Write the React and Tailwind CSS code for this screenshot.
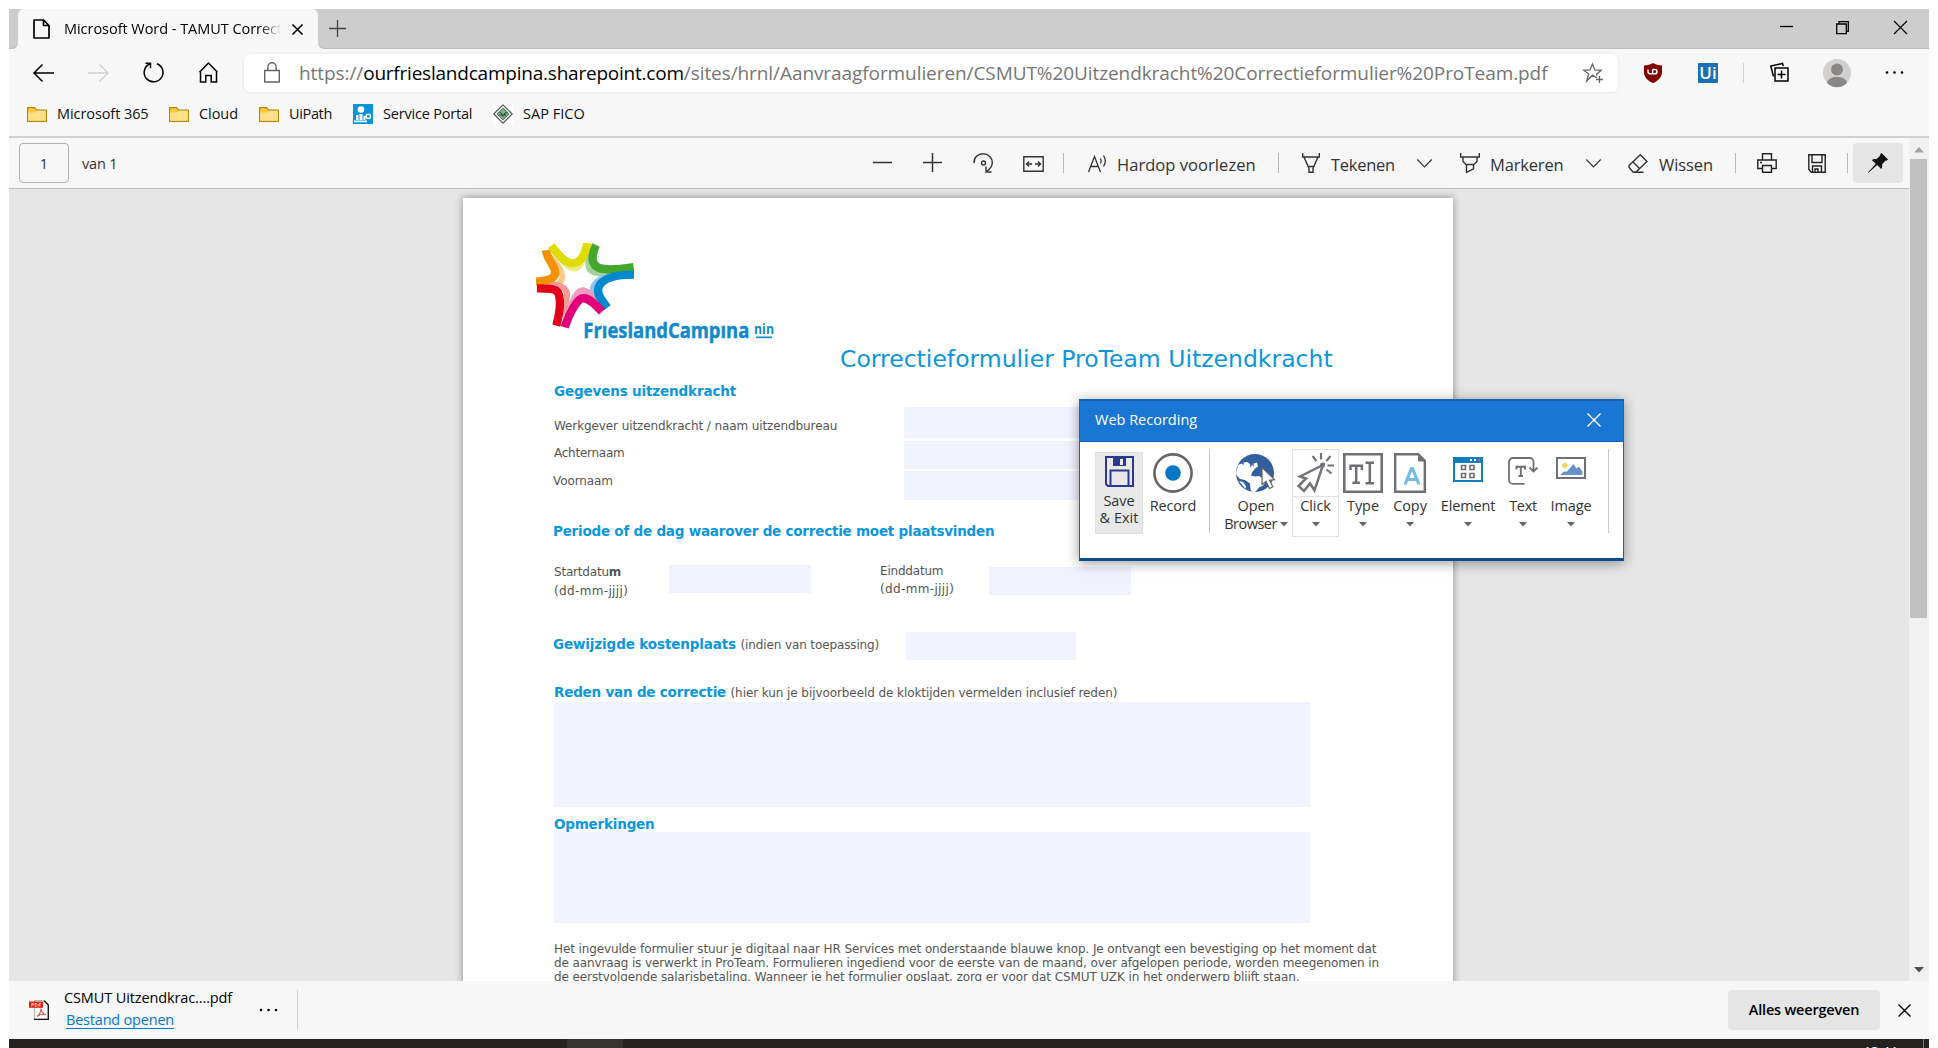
import React from 'react';

function Icon({ w, h, className = '', sw = 1.4, children }) {
  return (
    <svg
      width={w}
      height={h}
      viewBox={`0 0 ${w} ${h}`}
      fill="none"
      stroke="currentColor"
      strokeWidth={sw}
      className={`shrink-0 overflow-visible ${className}`}
    >
      {children}
    </svg>
  );
}

const Sep = ({ className = '' }) => <div className={`w-px shrink-0 bg-[#b8b8b8] ${className}`} />;

const Folder = ({ className = '' }) => (
  <Icon w={20} h={16} sw={1.2} className={className}>
    <path d="M.6 1.6h7l2 2.6h9.8v11.2H.6z" fill="#ffc83d" stroke="#b9860b" strokeLinejoin="round" />
    <path d="M1.2 6.6h6.6l2-1.8h9v10H1.2z" fill="#ffe08a" stroke="none" />
  </Icon>
);

function TabStrip() {
  return (
    <div className="flex h-10 bg-[linear-gradient(#cdcdcd_50%,#f7f7f7_50%)]">
      <div className="w-[9px] rounded-br-md border-b border-[#bdbdbd] bg-[#cdcdcd]" />
      <div className="flex w-[300px] items-center rounded-t-md bg-[#f7f7f7]">
        <Icon w={17} h={20} sw={1.7} className="ml-[15px] text-black">
          <path d="M1 1h9.5L16 6.500V19H1zM10.500 1v5.500H16" strokeLinejoin="round" />
        </Icon>
        <div className="ml-[14px] w-[217px] overflow-hidden whitespace-nowrap bg-linear-to-r from-black from-88% to-[#f7f7f7] bg-clip-text text-[14.5px] leading-5 tracking-[-0.04px] text-transparent">
          Microsoft Word - TAMUT Correctieformulier
        </div>
        <Icon w={11} h={11} sw={1.6} className="ml-[11px] text-black">
          <path d="M.5.5l10 10M10.500.5l-10 10" />
        </Icon>
      </div>
      <div className="flex flex-1 items-center rounded-bl-md border-b border-[#bdbdbd] bg-[#cdcdcd]">
        <Icon w={17} h={17} sw={1.3} className="ml-[11px] text-[#444]">
          <path d="M8.500 0v17M0 8.500h17" />
        </Icon>
        <Icon w={13} h={13} sw={1.3} className="ml-auto mb-1 text-black">
          <path d="M0 6.500h13" />
        </Icon>
        <Icon w={13} h={13} sw={1.3} className="ml-[43px] mb-[2px] text-black">
          <path d="M.7 3h9.600v9.600H.7zM3 3V.7h9.300V10.300h-2" />
        </Icon>
        <Icon w={13} h={13} sw={1.2} className="mb-[2px] ml-[45px] mr-[22px] text-black">
          <path d="M0 0l13 13M13 0L0 13" />
        </Icon>
      </div>
    </div>
  );
}

function AddressRow() {
  return (
    <div className="flex h-[47px] items-center">
      <Icon w={21} h={18} sw={1.5} className="ml-[24px] text-black">
        <path d="M1 9h20M9.500.5L1 9l8.500 8.500" />
      </Icon>
      <Icon w={21} h={18} sw={1.4} className="ml-[34px] text-[#cfcfcf]">
        <path d="M0 9h20M11.500.5L20 9l-8.500 8.500" />
      </Icon>
      <Icon w={21} h={21} sw={1.5} className="ml-[34px] text-black">
        <path d="M6.500 2A9.400 9.400 0 1 0 14 1.700M2.500 1.300h5v5" />
      </Icon>
      <Icon w={19} h={21} sw={1.5} className="ml-[35px] text-black">
        <path d="M1.500 9.500V20h5.300v-6.500h5.400V20h5.300V9.500M.5 10.300L9.500 1l9 9.300" />
      </Icon>
      <div className="ml-[26px] flex h-[38px] w-[1374px] shrink-0 items-center rounded-md bg-white shadow-[0_0_3px_rgba(0,0,0,0.1)]">
        <Icon w={16} h={21} sw={1.4} className="ml-5 text-[#666]">
          <path d="M.7 8.500h14.600V20H.7zM3.800 8.500V5a4.200 4.200 0 0 1 8.400 0v3.500" />
        </Icon>
        <div className="ml-[19px] flex w-[1260px] shrink-0 whitespace-nowrap text-[19px] leading-[26px] text-[#767676]">
          <span className="tracking-[-0.08px]">https://</span>
          <span className="tracking-[-0.22px] text-black">ourfrieslandcampina.sharepoint.com</span>
          <span className="tracking-[-0.08px]">
            /sites/hrnl/Aanvraagformulieren/CSMUT%20Uitzendkracht%20Correctieformulier%20ProTeam.pdf
          </span>
        </div>
        <Icon w={21} h={20} sw={1.3} className="ml-6 text-[#666]">
          <path d="M13.800 15L9.500 12.200 3.700 18l1.900-7L.8 7.300l6.200-.4L9.500.9l2.400 6 6.300.4-4.700 3.900.3 1.400M16.500 13v7M13 16.500h7" />
        </Icon>
      </div>
      <Icon w={18} h={20} className="ml-[26px]">
        <path d="M9 0c2.500 1.500 5.500 2.200 9 2.400v6.600c0 5.500-4 9-9 11-5-2-9-5.500-9-11V2.400C3.500 2.200 6.500 1.500 9 0z" fill="#800000" stroke="none" />
        <path d="M4 6.500v2.300a2 2 0 0 0 2 2h2.600V6.500M8.600 10.800h2.200a2.150 2.150 0 0 0 0-4.300H8.600" stroke="#fff" strokeWidth="1.500" />
      </Icon>
      <div className="ml-9 flex h-5 w-5 shrink-0 items-center justify-center rounded-[1px] bg-[#1b6fb5] text-[17px] font-semibold leading-5 text-white">
        Ui
      </div>
      <Sep className="ml-[25px] h-5 !bg-[#d0d0d0]" />
      <Icon w={19} h={19} sw={1.5} className="ml-[26px] text-black">
        <path d="M5 5h13v13H5zM11.500 7.500v8M7.500 11.500h8M3.500 13.500L.8 3l11.700-2.500L13.300 3" />
      </Icon>
      <Icon w={28} h={28} className="ml-[34px]">
        <circle cx="14" cy="14" r="14" fill="#d2d0ce" stroke="none" />
        <circle cx="14" cy="10.500" r="6" fill="#8a8886" stroke="none" />
        <path d="M4 24c1-4.500 5-6 10-6s9 1.500 10 6a14 14 0 0 1-20 0z" fill="#8a8886" stroke="none" />
      </Icon>
      <Icon w={19} h={4} className="ml-[34px] text-black">
        <g fill="currentColor" stroke="none">
          <circle cx="2" cy="1.500" r="1.300" />
          <circle cx="9.500" cy="1.500" r="1.300" />
          <circle cx="17" cy="1.500" r="1.300" />
        </g>
      </Icon>
    </div>
  );
}

function Bookmarks() {
  return (
    <div className="flex h-9 items-center whitespace-nowrap text-[14.5px] leading-5 text-[#111]">
      <Folder className="ml-[18px]" />
      <span className="ml-[10px] w-[92px] tracking-[-0.08px]">Microsoft 365</span>
      <Folder className="ml-5" />
      <span className="ml-[10px] w-10 tracking-[-0.06px]">Cloud</span>
      <Folder className="ml-5" />
      <span className="ml-[10px] w-11 tracking-[-0.35px]">UiPath</span>
      <Icon w={20} h={20} className="ml-[20px]">
        <path d="M0 0h20v20H0z" fill="#0a94da" stroke="none" />
        <g fill="#fff" stroke="none">
          <circle cx="8" cy="5.500" r="3.300" />
          <path d="M3 11h2.500v5H3zM6.500 10h3v6h-3zM10.500 12h2v4h-2zM1 16.500h13v1.700H1z" />
        </g>
        <circle cx="15.300" cy="12.300" r="2.200" stroke="#fff" />
      </Icon>
      <span className="ml-[10px] w-[90px] tracking-[-0.2px]">Service Portal</span>
      <Icon w={20} h={20} className="ml-5">
        <path d="M0 0h20v20H0z" fill="#fff" stroke="none" />
        <path d="M10 .8l9.200 9.200L10 19.200.8 10z" fill="#eef2ef" stroke="#5a5a5a" strokeWidth="1.200" />
        <path d="M10 4l6 6-6 6-6-6z" fill="#7fae8c" stroke="#555" strokeWidth=".8" />
        <path d="M7 8l3 4 3.500-4M6.500 11h7" stroke="#2f5a3d" strokeWidth="1.200" />
      </Icon>
      <span className="ml-[10px] tracking-[0.02px]">SAP FICO</span>
    </div>
  );
}

const Chevron = ({ className }) => (
  <Icon w={15} h={9} sw={1.1} className={className}>
    <path d="M.3.5l7.200 7.500L14.700.5" />
  </Icon>
);

function PdfToolbar() {
  return (
    <div className="flex h-[51px] flex-1 items-center whitespace-nowrap border-b border-[#bcbebe] bg-[#f7f7f7] text-[#333]">
      <div className="ml-[10px] flex h-10 w-[50px] items-center justify-center rounded-sm border border-[#b0b0b0] pt-px text-[14.5px]">1</div>
      <span className="ml-[13px] w-[40px] pt-px text-[14.5px] leading-5 tracking-[-0.2px]">van 1</span>
      <Icon w={19} h={20} sw={1.5} className="ml-[751px]"><path d="M0 9.500h19" /></Icon>
      <Icon w={19} h={20} sw={1.5} className="ml-[31px]"><path d="M0 9.500h19M9.500 0v19" /></Icon>
      <Icon w={21} h={20} sw={1.4} className="ml-[31px]">
        <path d="M1 10C.8 4.500 5 .8 10 .8c5.500 0 9.300 4 9.300 8.700 0 4-2.300 6.500-5.300 8.500M13 13.500V19h5.500" />
        <circle cx="10.500" cy="10" r="2" />
      </Icon>
      <Icon w={21} h={16} sw={1.4} className="mt-px ml-[29px]">
        <path d="M.8.8h19.400v14.400H.8zM3.500 8H9M12 8h5.500M6 5.500L3.500 8 6 10.500M15 5.500L17.500 8 15 10.500" />
      </Icon>
      <Sep className="ml-[19px] h-5" />
      <Icon w={20} h={19} sw={1.3} className="ml-[24px]">
        <path d="M.5 18L6.500 2.500l6 15.500M2.500 12.500h8M12.500 4.500a5 5 0 0 1 0 5M15.500 1.500a10 10 0 0 1 0 11" />
      </Icon>
      <span className="ml-[9px] w-[140px] pt-1 text-[16.5px] leading-6 tracking-[0.05px]">Hardop voorlezen</span>
      <Sep className="ml-[21px] h-5" />
      <Icon w={18} h={20} sw={1.4} className="ml-[23px]">
        <path d="M.7 0v4h16.600V0M2 4l5 11.500v3.800h4V15.500L16 4M6 13.500h6" />
      </Icon>
      <span className="ml-[11px] w-[65px] pt-1 text-[16.5px] leading-6 tracking-[-0.26px]">Tekenen</span>
      <Chevron className="ml-[21px]" />
      <Icon w={20} h={20} sw={1.4} className="ml-[28px]">
        <path d="M.7 0v4h18.600V0M3 4v4.500l3 3h8l3-3V4M6.500 11.500v7.800l7-3.500v-4.300" />
      </Icon>
      <span className="ml-[10px] w-[75px] pt-1 text-[16.5px] leading-6 tracking-[-0.17px]">Markeren</span>
      <Chevron className="ml-[21px]" />
      <Icon w={20} h={19} sw={1.4} className="ml-[27px]">
        <path d="M1 11.500L12.300.8l6.700 6.700L8 18H5L.9 13.200zM5 8l7 7M6 18.200h9.500" />
      </Icon>
      <span className="ml-[11px] w-[55px] pt-1 text-[16.5px] leading-6 tracking-[-0.09px]">Wissen</span>
      <Sep className="ml-[21px] h-5 w-[2px]" />
      <Icon w={20} h={20} sw={1.4} className="ml-[21px] text-[#222]">
        <path d="M5.500 7V.8h9V7M5 15.500H.8V7h18.400v8.500H15M5.500 12.500h9v6.700h-9z" />
        <path d="M3 9.500h2" />
      </Icon>
      <Icon w={18} h={19} sw={1.4} className="ml-[31px] text-[#222]">
        <path d="M.8.8h16.400v17.400H3.500L.8 15.500zM4 .8v7.700h10V.8M4.500 18v-6h9v6M7 18v-3h3v3" />
      </Icon>
      <Sep className="ml-[21px] h-5" />
      <div className="ml-[5px] flex h-10 w-[50px] items-center justify-center rounded-sm bg-[#e5e5e5]">
        <Icon w={20} h={20} className="text-[#111]">
          <path d="M13.500 0L20 6.500l-1.500 1.300-1-.3-3.500 4c.5 1.500.3 3-.8 4.500l-4-4L.5 19.700 0 19.300 7.800 11l-4-4c1.500-1 3-1.300 4.500-.8l4-3.600-.2-1z" fill="currentColor" stroke="none" />
        </Icon>
      </div>
    </div>
  );
}

function Logo() {
  return (
    <svg width="240" height="102" viewBox="18 24 720 306" className="ml-[73px] block">
      <g fill="none" strokeWidth="18">
        <path d="M62 66Q112 118 90 142Q80 152 50 152" stroke="#fbc98a" />
        <path d="M86 62C112 102 134 108 150 92Q164 74 168 50" stroke="#eeec8c" />
        <path d="M180 58C170 92 174 110 200 114Q220 117 260 110" stroke="#a3d19a" />
        <path d="M270 116C222 122 196 136 189 158C186 172 192 188 206 206" stroke="#8fc6ea" />
        <path d="M122 220C132 182 146 166 160 166C176 168 186 182 198 200" stroke="#f199c2" />
        <path d="M50 149C86 147 104 154 111 172C112 200 106 214 98 236" stroke="#f29a94" />
      </g>
      <g fill="none" strokeWidth="25">
        <path d="M48 46Q50 62 64 84Q84 114 68 128Q54 138 18 140" stroke="#f39200" />
        <path d="M64 32C92 72 112 85 128 85C152 84 166 56 172 24" stroke="#dedc00" />
        <path d="M198 30C182 64 184 90 208 99Q234 108 311 96" stroke="#43a82c" />
        <path d="M312 119C248 119 216 132 206 156C199 178 214 194 232 218" stroke="#0089cf" />
        <path d="M104 277C118 234 142 190 160 189C180 191 196 208 216 230" stroke="#e2007a" />
        <path d="M21 160C64 161 82 160 87 180C93 204 88 240 79 272" stroke="#e2001a" />
      </g>
      <text x="160" y="309" textLength="498" lengthAdjust="spacingAndGlyphs" fill="#118acb" stroke="#118acb" strokeWidth="1.5" className="font-['Open_Sans'] text-[66px] font-bold">
        FrıeslandCampına
      </text>
      <text x="672" y="298" textLength="60" lengthAdjust="spacingAndGlyphs" fill="#118acb" className="font-['Open_Sans'] text-[40px] font-bold">
        nin
      </text>
      <path d="M678 307h48" stroke="#118acb" strokeWidth="5" />
    </svg>
  );
}

const Field = ({ className }) => <div className={`shrink-0 bg-[#f0f2fe] ${className}`} />;
const Head = ({ className = '', children }) => (
  <span className={`text-[13.5px] font-bold leading-4 text-[#0b97dd] ${className}`}>{children}</span>
);

function PdfPage() {
  return (
    <div className="ml-[454px] mt-[9px] flex h-[860px] w-[990px] flex-col whitespace-nowrap bg-white pt-[45px] font-['DejaVu_Sans',sans-serif] text-xs leading-4 text-[#555] shadow-[0_0_8px_rgba(0,0,0,0.4)]">
      <Logo />
      <h1 className="ml-[377px] text-[23.5px] leading-7 tracking-[0.01px] text-[#0b97dd]">
        Correctieformulier ProTeam Uitzendkracht
      </h1>
      <Head className="ml-[91px] mt-[10px] tracking-[-0.14px]">Gegevens uitzendkracht</Head>
      <div className="ml-[91px] mt-2 flex h-[31px]">
        <span className="w-[350px] pt-[11px] tracking-[-0.1px]">Werkgever uitzendkracht / naam uitzendbureau</span>
        <Field className="w-[178px]" />
      </div>
      <div className="ml-[91px] mt-[3px] flex h-7">
        <span className="w-[350px] pt-1 tracking-[-0.25px]">Achternaam</span>
        <Field className="w-[178px]" />
      </div>
      <div className="ml-[90px] mt-[2px] flex h-[29px]">
        <span className="w-[351px] pt-[2px] tracking-[-0.1px]">Voornaam</span>
        <Field className="w-[178px]" />
      </div>
      <Head className="ml-[90px] mt-[23px] tracking-[-0.22px]">Periode of de dag waarover de correctie moet plaatsvinden</Head>
      <div className="ml-[91px] mt-6 flex h-[37px]">
        <div className="w-[115px] leading-[19px]">
          <div className="tracking-[-0.2px]">Startdatu<b>m</b></div>
          <div className="tracking-[0.35px]">(dd-mm-jjjj)</div>
        </div>
        <Field className="mt-[2px] h-7 w-[142px]" />
        <div className="ml-[69px] w-[109px] leading-[18px]">
          <div className="-mt-px tracking-[-0.2px]">Einddatum</div>
          <div className="tracking-[0.35px]">(dd-mm-jjjj)</div>
        </div>
        <Field className="mt-1 h-7 w-[142px]" />
      </div>
      <div className="ml-[90px] mt-8 flex h-7">
        <div className="w-[353px] pt-1">
          <Head className="tracking-[-0.12px]">Gewijzigde kostenplaats</Head>
          <span className="ml-[4.5px] tracking-[-0.12px]">(indien van toepassing)</span>
        </div>
        <Field className="w-[170px]" />
      </div>
      <div className="ml-[91px] mt-6 h-4">
        <Head className="tracking-[-0.2px]">Reden van de correctie</Head>
        <span className="ml-[4.5px] tracking-[-0.08px]">(hier kun je bijvoorbeeld de kloktijden vermelden inclusief reden)</span>
      </div>
      <Field className="ml-[91px] mt-[2px] h-[105px] w-[756px]" />
      <Head className="ml-[91px] mt-[9px] tracking-[-0.2px]">Opmerkingen</Head>
      <Field className="ml-[91px] h-[91px] w-[756px]" />
      <p className="ml-[91px] mt-[19px] leading-[14px] tracking-[-0.117px]">
        Het ingevulde formulier stuur je digitaal naar HR Services met onderstaande blauwe knop. Je ontvangt een bevestiging op het moment dat<br />
        de aanvraag is verwerkt in ProTeam. Formulieren ingediend voor de eerste van de maand, over afgelopen periode, worden meegenomen in<br />
        <span className="tracking-[-0.1px]">de eerstvolgende salarisbetaling. Wanneer je het formulier opslaat, zorg er voor dat CSMUT UZK in het onderwerp blijft staan.</span>
      </p>
    </div>
  );
}

const Down = ({ className = '' }) => (
  <Icon w={8} h={5} className={`text-[#666] ${className}`}>
    <path d="M0 0h8L4 4.600z" fill="currentColor" stroke="none" />
  </Icon>
);

function Tool({ className, label, children }) {
  return (
    <div className={`flex shrink-0 flex-col items-center ${className}`}>
      <div className="h-12">{children}</div>
      <span className="leading-[18px]">{label}</span>
      <Down className="mt-[7px]" />
    </div>
  );
}

function RecordingDialog() {
  return (
    <div className="absolute left-[1079px] top-[399px] h-[162px] w-[545px] border border-b-[3px] border-[#1565b8] border-b-[#0b4c8c] bg-white shadow-[0_2px_12px_rgba(0,0,0,0.4)]">
      <div className="flex h-[42px] items-center justify-between border-b border-t border-[#1560b4] bg-[#1976d2] pb-[2px] pl-[15px] pr-[22px] text-white">
        <span className="text-[14.5px] leading-5 tracking-[0px]">Web Recording</span>
        <Icon w={14} h={14} sw={1.4}><path d="M.5.5l13 13M13.500.5l-13 13" /></Icon>
      </div>
      <div className="flex whitespace-nowrap pl-[15px] pt-[7px] text-[14.5px] text-[#333]">
        <div className="mt-[3px] flex h-[82px] w-12 flex-col items-center border border-[#e0e0e0] bg-[#e8e8e8] pt-1 leading-[17px]">
          <Icon w={29} h={31} sw={2} className="-mt-px text-[#2b3990]">
            <path d="M1 1h27v29H3L1 28zM5.500 30V14.500h18V30" />
            <path d="M8 1v9h13V1z" fill="currentColor" stroke="none" />
            <path d="M15 3h3v6h-3z" fill="#e8e8e8" stroke="none" />
          </Icon>
          <span className="mt-[5px] tracking-[-0.1px]">Save</span>
          <span>&amp; Exit</span>
        </div>
        <div className="flex w-[60px] flex-col items-center">
          <div className="h-12 pt-1">
            <Icon w={40} h={40} sw={2.6} className="text-[#666]">
              <circle cx="20" cy="20" r="18.600" />
              <circle cx="20" cy="20" r="7.800" fill="#0677c4" stroke="none" />
            </Icon>
          </div>
          <span className="leading-[18px] tracking-[-0.15px]">Record</span>
        </div>
        <div className="ml-[6px] h-[84px] w-px bg-[#c8c8c8]" />
        <div className="ml-[10px] flex w-[72px] flex-col items-center leading-[18px]">
          <div className="h-12 pt-[5px]">
            <Icon w={40} h={39}>
              <circle cx="19" cy="19" r="19" fill="#345f9f" stroke="none" />
              <path d="M2 11l3.500-1.500L8 11l-.5-2.500L11 8l3 2 .5 4 1.500-3.500 2 2.500-.5-3.500 3.500-1 1 4-3 2-3 4-1 3 4 1 4-.5 5 3 1 4-2.500 3-3 1-3.500 4-2.500 2.500-3-4-.5-6L9 26l-5-1-3.300-3.500L0 19z" fill="#fff" stroke="none" />
              <path d="M3 27l4 1 3 4-.5 3z" fill="#fff" stroke="none" />
              <path d="M26 13.500v17l4-3 3.500 7 3.300-1.700-3.200-6.600 5-.5z" fill="#fff" stroke="#666" strokeWidth="1.200" />
            </Icon>
          </div>
          <span className="tracking-[-0.1px]">Open</span>
          <span className="flex items-center gap-[3px] tracking-[-0.5px]">Browser<Down /></span>
        </div>
        <div className="h-[88px] w-[47px] border border-[#e2e2e2]">
          <div className="h-[47px] border-b border-[#e2e2e2] pl-1 pt-[3px]">
            <Icon w={37} h={39} sw={2.5} className="text-[#737477]">
              <path d="M26 12L3 23.500l6 2L1.500 33l5.500 5 6-7.500 4.500 7z" strokeLinejoin="miter" />
              <circle cx="25.500" cy="12" r="2.500" fill="currentColor" stroke="none" />
              <path d="M24 0v6.500M15.500 3l4 5M33.500 3l-4 5M30.500 12.500H37M29.500 16.500l5 4" strokeWidth="2.200" />
            </Icon>
          </div>
          <div className="flex flex-col items-center">
            <span className="leading-[18px] tracking-[-0.1px]">Click</span>
            <Down className="mt-[7px]" />
          </div>
        </div>
        <Tool className="w-12 tracking-[-0.1px]" label="Type">
          <Icon w={40} h={40} sw={2.6} className="mt-1 text-[#6f7073]">
            <path d="M1.300 1.300h37.400v37.400H1.300z" />
            <path d="M7.500 17v-4.300h11.400V17M13.200 13v16M9.500 29.700h7.400M22.500 9.700h8.600M22.500 30.200h8.600M26.800 10v20" strokeWidth="2.500" />
          </Icon>
        </Tool>
        <Tool className="w-[46px] tracking-[-0.1px]" label="Copy">
          <Icon w={32} h={40} sw={2.4} className="mt-1 text-[#6f7073]">
            <path d="M1.200 1.200h23l6.600 6.600v31H1.200z" />
            <path d="M24 0v8.500h8z" fill="currentColor" stroke="none" />
            <path d="M11 31.500l6.500-16h1l6.500 16M13.500 26.500h9" stroke="#77bce6" strokeWidth="3.200" />
          </Icon>
        </Tool>
        <Tool className="w-[70px] tracking-[-0.15px]" label="Element">
          <Icon w={30} h={25} sw={2} className="mt-2 text-[#707174]">
            <path d="M1 1h28v23H1z" stroke="#0f7ebf" />
            <path d="M0 0h30v6H0z" fill="#0f7ebf" stroke="none" />
            <path d="M17 3h2M21 3h2" stroke="#fff" />
            <path d="M25 3h2" stroke="#f0506e" />
            <path d="M8.500 8.500h4v4h-4zM17 8.500h4v4h-4zM8.500 16.500h4v4h-4zM17 16.500h4v4h-4z" strokeWidth="1.600" />
          </Icon>
        </Tool>
        <Tool className="w-10 tracking-[-0.3px]" label="Text">
          <Icon w={30} h={28} sw={1.8} className="mt-2 text-[#707174]">
            <path d="M16.500 26.800H5A4 4 0 0 1 1 23V5a4 4 0 0 1 4-4h17a3.500 3.500 0 0 1 3.500 3.500V14M21.500 10.500l4 4 4-4" />
            <path d="M8.500 12.500V9.700h8.500v2.800M12.800 10v8.700M10.500 19h4.500" strokeWidth="1.900" />
          </Icon>
        </Tool>
        <Tool className="w-14 tracking-[-0.1px]" label="Image">
          <Icon w={30} h={22} sw={2} className="mt-2 text-[#707174]">
            <path d="M1 1h28v20H1z" />
            <circle cx="8.800" cy="8.500" r="2.800" fill="#f3d66b" stroke="none" />
            <path d="M4 18l4-3.500h3L17.500 7l3 4.500L23 9.500l3.300 5V18z" fill="#6791cb" stroke="none" />
          </Icon>
        </Tool>
        <div className="ml-[9px] h-[84px] w-px bg-[#c8c8c8]" />
      </div>
    </div>
  );
}

function Scrollbar() {
  return (
    <div className="flex w-5 shrink-0 flex-col items-center bg-[#f1f1f1] pt-[9px]">
      <Icon w={10} h={6}><path d="M0 5.500L5 0l5 5.500z" fill="#a3a3a3" stroke="none" /></Icon>
      <div className="mr-px mt-[6px] h-[459px] w-[17px] bg-[#c1c1c1]" />
      <Icon w={10} h={6} className="mb-[8px] mr-px mt-auto"><path d="M0 0h10L5 5.500z" fill="#505050" stroke="none" /></Icon>
    </div>
  );
}

function DownloadBar() {
  return (
    <div className="flex h-[58px] items-center whitespace-nowrap bg-[#f7f7f7] text-[14.5px]">
      <Icon w={20} h={20} sw={1.3} className="ml-5">
        <path d="M5.500.7h9.800l4 4v14.600H5.500z" fill="#fff" stroke="#bbb" />
        <path d="M15 .7l4.300 4.300v14.300H5" stroke="#111" />
        <path d="M8 16.500c3-2.500 4-5 4-8 .5 4 2.500 5.500 5 6-3-.5-6 0-9 2z" stroke="#e2574c" strokeWidth="1.100" />
        <path d="M0 1.500h14v6.300H0z" fill="#e1210b" stroke="none" />
        <path d="M2.500 6.500v-3h1.800v1.500H2.500M6 3.500v3h1.200l.8-.8V4.300l-.8-.8zM10 6.500v-3h2M10 5h1.500" stroke="#fff" strokeWidth=".7" />
      </Icon>
      <div className="ml-[15px] w-[172px] pb-[2px] leading-[22px]">
        <div className="tracking-[-0.12px] text-black">CSMUT Uitzendkrac....pdf</div>
        <div className="ml-[2px] tracking-[-0.2px] text-[#0078d4]"><span className="underline underline-offset-[3px]">Bestand openen</span></div>
      </div>
      <Icon w={19} h={4} className="ml-[23px] text-black">
        <g fill="currentColor" stroke="none">
          <circle cx="2" cy="2" r="1.300" />
          <circle cx="9.500" cy="2" r="1.300" />
          <circle cx="17" cy="2" r="1.300" />
        </g>
      </Icon>
      <Sep className="ml-[19px] h-10 !bg-[#cfcfcf]" />
      <div className="ml-auto flex h-10 w-[152px] items-center justify-center rounded-sm bg-[#e5e5e5] font-semibold leading-5 tracking-[-0.2px] text-black">
        Alles weergeven
      </div>
      <Icon w={13} h={13} sw={1.4} className="ml-[18px] mr-[18px] text-black"><path d="M.5.5l12 12M12.500.5l-12 12" /></Icon>
    </div>
  );
}

export default function App() {
  return (
    <div className="relative flex h-[1048px] w-[1938px] flex-col overflow-hidden bg-white px-[9px] pt-[9px] font-['Open_Sans',sans-serif]">
      <TabStrip />
      <div className="h-[87px] bg-[#f7f7f7]">
        <AddressRow />
        <Bookmarks />
      </div>
      <div className="h-[2px] shrink-0 bg-[#d0d0d0]" />
      <div className="flex h-[843px] shrink-0 overflow-hidden">
        <div className="flex min-w-0 flex-1 flex-col bg-[#e6e6e6]">
          <div className="flex shrink-0"><PdfToolbar /></div>
          <div className="h-[792px] shrink-0 overflow-hidden"><PdfPage /></div>
        </div>
        <Scrollbar />
      </div>
      <DownloadBar />
      <div className="flex h-[9px] shrink-0 items-start overflow-hidden bg-[#252321]">
        <div className="ml-[558px] h-full w-14 bg-[#353433]" />
        <div className="ml-auto mr-[26px] mt-[4px] text-[13px] leading-4 text-white">13:44</div>
        <div className="mr-[5px] h-full w-px bg-[#777]" />
      </div>
      <RecordingDialog />
    </div>
  );
}
